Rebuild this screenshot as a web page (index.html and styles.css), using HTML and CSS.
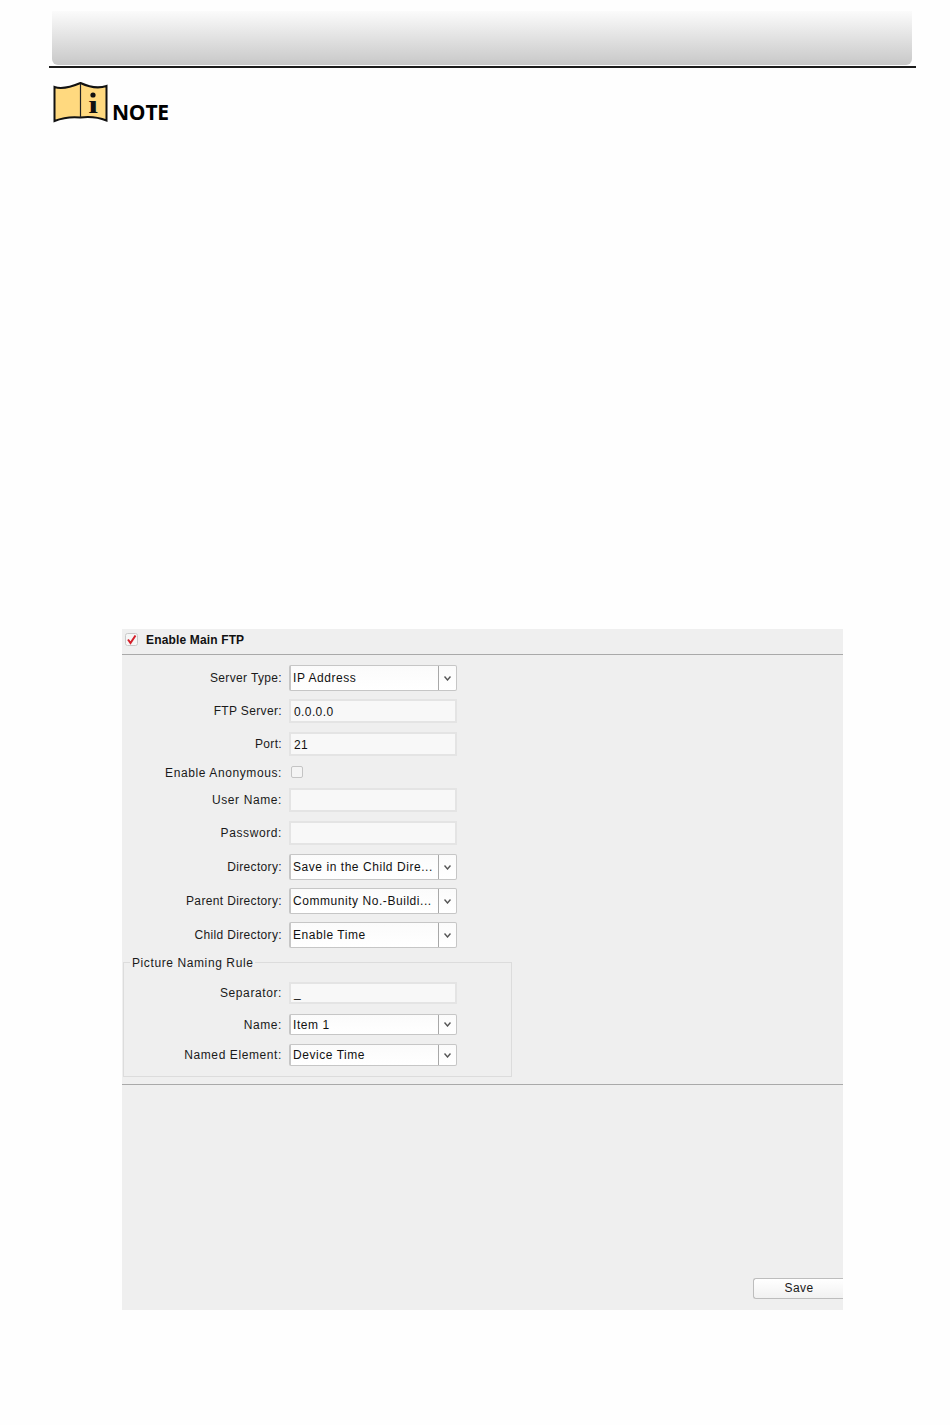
FILE: index.html
```html
<!DOCTYPE html>
<html lang="en">
<head>
  <meta charset="UTF-8">
  <title>FTP Settings</title>
  <link rel="stylesheet" href="styles.css">
</head>
<body>
  <div class="page-band"></div>
  <div class="page-rule"></div>

  <div class="note">
    <svg class="note-icon" width="55" height="41" viewBox="0 0 55 41">
      <path d="M1.5 5 C9 7.5 18 5 27.5 1 C36 5 46 6.5 53.5 4 V38.5 C46 35.5 36 34.5 27.5 35.5 C18 34.5 9 36 1.5 39 Z" fill="#ffd97f" stroke="#111" stroke-width="2"/>
      <path d="M27.5 2 V35.5" stroke="#222" stroke-width="1.2"/>
      <circle cx="40" cy="13" r="2.6" fill="#111"/>
      <text class="note-i" transform="translate(40 31) scale(1.35 1)" text-anchor="middle">ı</text>
    </svg>
    <span class="note-text">NOTE</span>
  </div>

  <div class="panel">
    <div class="panel-head">
      <svg class="check-on" width="13" height="13" viewBox="0 0 13 13">
        <rect x="0.5" y="0.5" width="12" height="12" rx="2" fill="#f6f6f6" stroke="#c9c9c9"/>
        <path d="M3 6.5 L5.5 10 L10.5 2.5" fill="none" stroke="#d3202a" stroke-width="2"/>
      </svg>
      <span class="head-label">Enable Main FTP</span>
    </div>

    <div class="form">
      <div class="row row-select">
        <span class="label">Server Type:</span>
        <div class="select"><span class="select-value">IP Address</span><span class="select-arrow"><svg width="7" height="5" viewBox="0 0 7 5"><path d="M0.5 0.5 L3.5 4 L6.5 0.5" fill="none" stroke="#555" stroke-width="1.4"/></svg></span></div>
      </div>
      <div class="row row-input">
        <span class="label">FTP Server:</span>
        <div class="input">0.0.0.0</div>
      </div>
      <div class="row row-input">
        <span class="label">Port:</span>
        <div class="input">21</div>
      </div>
      <div class="row row-check">
        <span class="label label-wide">Enable Anonymous:</span>
        <span class="check-off"></span>
      </div>
      <div class="row row-input">
        <span class="label label-wide">User Name:</span>
        <div class="input"></div>
      </div>
      <div class="row row-input">
        <span class="label label-wide">Password:</span>
        <div class="input"></div>
      </div>
      <div class="row row-select">
        <span class="label">Directory:</span>
        <div class="select"><span class="select-value">Save in the Child Dire...</span><span class="select-arrow"><svg width="7" height="5" viewBox="0 0 7 5"><path d="M0.5 0.5 L3.5 4 L6.5 0.5" fill="none" stroke="#555" stroke-width="1.4"/></svg></span></div>
      </div>
      <div class="row row-select">
        <span class="label">Parent Directory:</span>
        <div class="select"><span class="select-value">Community No.-Buildi...</span><span class="select-arrow"><svg width="7" height="5" viewBox="0 0 7 5"><path d="M0.5 0.5 L3.5 4 L6.5 0.5" fill="none" stroke="#555" stroke-width="1.4"/></svg></span></div>
      </div>
      <div class="row row-select">
        <span class="label">Child Directory:</span>
        <div class="select"><span class="select-value">Enable Time</span><span class="select-arrow"><svg width="7" height="5" viewBox="0 0 7 5"><path d="M0.5 0.5 L3.5 4 L6.5 0.5" fill="none" stroke="#555" stroke-width="1.4"/></svg></span></div>
      </div>

      <div class="group">
        <span class="group-title">Picture Naming Rule</span>
        <div class="row row-small row-sep">
          <span class="label label-wide">Separator:</span>
          <div class="input">_</div>
        </div>
        <div class="row row-small row-name">
          <span class="label label-wide">Name:</span>
          <div class="select"><span class="select-value">Item 1</span><span class="select-arrow"><svg width="7" height="5" viewBox="0 0 7 5"><path d="M0.5 0.5 L3.5 4 L6.5 0.5" fill="none" stroke="#555" stroke-width="1.4"/></svg></span></div>
        </div>
        <div class="row row-small">
          <span class="label label-wide">Named Element:</span>
          <div class="select"><span class="select-value">Device Time</span><span class="select-arrow"><svg width="7" height="5" viewBox="0 0 7 5"><path d="M0.5 0.5 L3.5 4 L6.5 0.5" fill="none" stroke="#555" stroke-width="1.4"/></svg></span></div>
        </div>
      </div>
    </div>

    <div class="panel-foot">
      <div class="save-btn">Save</div>
    </div>
  </div>
</body>
</html>
```

FILE: styles.css
```css
body {
  margin: 0;
  background: #fefefe;
  font-family: "Liberation Sans", Arial, sans-serif;
  font-size: 12px;
  color: #1a1a1a;
}

.page-band {
  height: 54px;
  margin: 0 38px 0 52px;
  border-top: 11px solid #fefefe;
  background: linear-gradient(to bottom, #fbfbfb, #c8c8c8);
  border-radius: 0 0 6px 6px;
}

.page-rule {
  height: 2px;
  margin: 1px 34px 0 49px;
  background: #1c1c1c;
}

.note {
  display: flex;
  align-items: flex-end;
  height: 41px;
  margin: 14px 0 0 53px;
}

.note-text {
  margin: 0 0 -3px 4px;
  font-family: "Open Sans", sans-serif;
  font-size: 21px;
  font-weight: 700;
  line-height: 28px;
  letter-spacing: -0.2px;
  color: #000;
}

.note-i {
  font-family: "Liberation Serif", serif;
  font-size: 26px;
  font-weight: 700;
  fill: #111;
}

.panel {
  width: 721px;
  height: 681px;
  margin: 506px 0 0 122px;
  background: #efefef;
  display: flex;
  flex-direction: column;
}

.panel-head {
  box-sizing: border-box;
  display: flex;
  align-items: center;
  height: 26px;
  padding: 0 0 4px 3px;
  border-bottom: 1px solid #a9a9a9;
  flex: none;
}

.head-label {
  margin-left: 8px;
  font-weight: 700;
  letter-spacing: 0.15px;
  color: #111;
}

.form {
  box-sizing: border-box;
  height: 430px;
  padding: 10px 0 0 1px;
  border-bottom: 1px solid #a9a9a9;
  flex: none;
}

.row {
  display: flex;
  align-items: center;
}

.row-select {
  height: 26px;
  margin-bottom: 8px;
}

.row-input {
  height: 24px;
  margin-bottom: 9px;
}

.row-check {
  height: 14px;
  margin-bottom: 9px;
}

.row-check .label {
  margin-top: 2px;
}

.row-small {
  height: 22px;
}

.row-sep {
  margin-bottom: 10px;
}

.row-sep .input {
  line-height: 19px;
}

.row-name {
  height: 21px;
  margin-bottom: 9px;
}

.label {
  width: 159px;
  margin-right: 7px;
  text-align: right;
  letter-spacing: 0.35px;
  flex: none;
}

.label-wide {
  letter-spacing: 0.6px;
}

.input {
  box-sizing: border-box;
  width: 168px;
  height: 100%;
  padding-left: 3px;
  border: 2px solid #e4e4e4;
  background: #f8f8f8;
  line-height: 22px;
  letter-spacing: 0.4px;
  color: #111;
}

.select {
  box-sizing: border-box;
  display: flex;
  width: 168px;
  height: 100%;
  border: 1px solid #c6c6c6;
  border-left: 2px solid #c6c6c6;
  border-radius: 2px;
  background: linear-gradient(to bottom, #fbfbfb, #ffffff);
}

.select-value {
  flex: 1;
  padding-left: 2px;
  align-self: center;
  letter-spacing: 0.55px;
  color: #111;
  white-space: nowrap;
}

.select-arrow {
  display: flex;
  align-items: center;
  justify-content: center;
  width: 17px;
  border-left: 1px solid #a8a8a8;
}

.check-off {
  box-sizing: border-box;
  width: 12px;
  height: 12px;
  margin-left: 2px;
  border: 1px solid #c4c4c4;
  border-radius: 2px;
  background: #f4f4f4;
}

.group {
  position: relative;
  box-sizing: border-box;
  width: 389px;
  height: 115px;
  margin-top: 14px;
  padding-top: 19px;
  border: 1px solid #dcdcdc;
}

.group .label {
  width: 158px;
}

.group-title {
  position: absolute;
  top: -7px;
  left: 6px;
  padding: 0 2px;
  background: #efefef;
  letter-spacing: 0.6px;
}

.panel-foot {
  flex: 1;
  display: flex;
  justify-content: flex-end;
  align-items: flex-end;
  padding-bottom: 11px;
}

.save-btn {
  box-sizing: border-box;
  width: 90px;
  height: 21px;
  padding-left: 1px;
  border: 1px solid #bdbdbd;
  border-right: none;
  border-radius: 3px 0 0 3px;
  background: linear-gradient(to bottom, #ffffff, #f1f1f1);
  text-align: center;
  line-height: 19px;
  letter-spacing: 0.4px;
}
```
